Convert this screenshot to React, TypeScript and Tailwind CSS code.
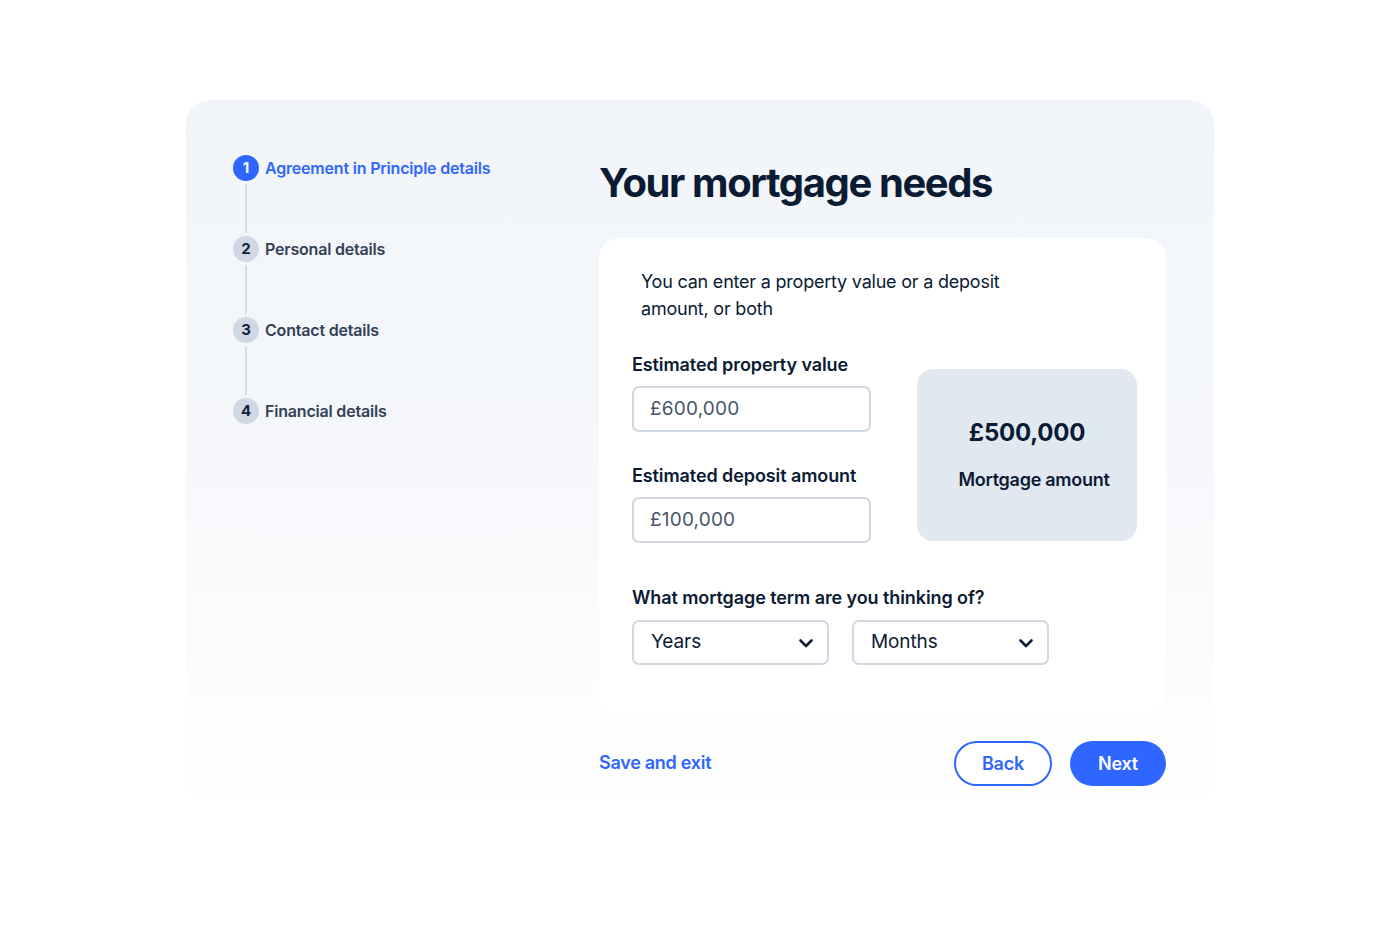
import React from "react";

const Chevron = () => (
  <svg width="18" height="18" viewBox="0 0 18 18" fill="none">
    <path d="M3.5 6.5l5.5 5.5 5.5-5.5" stroke="#0b1b33" strokeWidth="2.6" strokeLinecap="round" strokeLinejoin="round" />
  </svg>
);

const steps = [
  { n: 1, label: "Agreement in Principle details", active: true },
  { n: 2, label: "Personal details", active: false },
  { n: 3, label: "Contact details", active: false },
  { n: 4, label: "Financial details", active: false },
];

export default function App() {
  return (
    <div className="min-h-[950px] bg-white pt-[100px]" style={{ fontFamily: "Inter, 'Noto Sans', sans-serif" }}>
      <div className="mx-auto flex h-[710px] w-[1028px] rounded-[24px] bg-gradient-to-b from-[#f1f5f9] via-[#f5f7fa] to-white pl-[47px] pr-[48px] pt-[55px]">
        {/* Steps */}
        <div className="w-[366px] shrink-0">
          {steps.map((s, i) => (
            <div key={s.n} className="flex flex-col">
              <div className="flex h-[26px] items-center gap-[6px]">
                <div
                  className={
                    s.active
                      ? "flex h-[26px] w-[26px] items-center justify-center rounded-full bg-[#2f66ff] text-[15px] font-bold text-white"
                      : "flex h-[26px] w-[26px] items-center justify-center rounded-full bg-[#cfd8e3] text-[15px] font-bold text-[#0f1f3d]"
                  }
                >
                  {s.n}
                </div>
                <span
                  className={
                    s.active
                      ? "text-[16px] font-semibold tracking-[-0.012em] text-[#2f66ff]"
                      : "text-[16px] font-semibold tracking-[-0.012em] text-[#334155]"
                  }
                >
                  {s.label}
                </span>
              </div>
              {i < steps.length - 1 && (
                <div className="my-[3px] ml-[12px] h-[49px] w-[2px] bg-[#d5dce6]" />
              )}
            </div>
          ))}
        </div>

        {/* Main */}
        <div className="flex-1">
          <h1 className="mt-[4px] text-[40px] font-bold leading-[48px] tracking-[-0.035em] text-[#0b1b33]">
            Your mortgage needs
          </h1>
          <div className="mt-[31px] rounded-[20px] bg-white pb-[49px] pl-[33px] pr-[29px] pt-[30px]">
            <p className="max-w-[400px] pl-[9px] text-[18px] leading-[27px] tracking-[-0.012em] text-[#0b1b33]">
              You can enter a property value or a deposit amount, or both
            </p>
            <div className="mt-[31px] flex items-start gap-[46px]">
              <div className="w-[239px]">
                <label className="block text-[18px] font-semibold leading-[24px] tracking-[-0.005em] text-[#0b1b33]">
                  Estimated property value
                </label>
                <div className="mt-[9px] flex h-[46px] items-center rounded-[7px] border-2 border-[#cfd8e3] bg-white px-[16px] text-[19px] tracking-[0.01em] text-[#475569]">
                  £600,000
                </div>
                <label className="mt-[32px] block text-[18px] font-semibold leading-[24px] tracking-[-0.005em] text-[#0b1b33]">
                  Estimated deposit amount
                </label>
                <div className="mt-[9px] flex h-[46px] items-center rounded-[7px] border-2 border-[#cfd8e3] bg-white px-[16px] text-[19px] tracking-[0.01em] text-[#475569]">
                  £100,000
                </div>
              </div>
              <div className="mt-[16px] flex h-[172px] w-[220px] flex-col items-center justify-center rounded-[16px] bg-[#e2e8f0]">
                <div className="text-[24px] font-bold leading-[30px] tracking-[-0.01em] text-[#0b1b33]">£500,000</div>
                <div className="mt-[20px] pl-[14px] text-[18px] font-semibold leading-[24px] tracking-[-0.015em] text-[#0b1b33]">
                  Mortgage amount
                </div>
              </div>
            </div>
            <label className="mt-[43px] block text-[18px] font-semibold leading-[24px] tracking-[-0.005em] text-[#0b1b33]">
              What mortgage term are you thinking of?
            </label>
            <div className="mt-[10px] flex gap-[23px]">
              <div className="flex h-[45px] w-[197px] items-center justify-between rounded-[7px] border-2 border-[#cfd8e3] bg-white pl-[17px] pr-[12px] text-[19px] tracking-[-0.005em] text-[#0b1b33]">
                <span>Years</span>
                <Chevron />
              </div>
              <div className="flex h-[45px] w-[197px] items-center justify-between rounded-[7px] border-2 border-[#cfd8e3] bg-white pl-[17px] pr-[12px] text-[19px] tracking-[-0.005em] text-[#0b1b33]">
                <span>Months</span>
                <Chevron />
              </div>
            </div>
          </div>
          <div className="mt-[27px] flex items-center justify-between">
            <a className="mt-[-2px] text-[18px] font-semibold tracking-[-0.015em] text-[#2f66ff]">Save and exit</a>
            <div className="flex gap-[18px]">
              <button className="h-[45px] w-[98px] rounded-full border-2 border-[#2f66ff] bg-white text-[18px] font-semibold tracking-[-0.01em] text-[#2f66ff]">
                Back
              </button>
              <button className="h-[45px] w-[96px] rounded-full bg-[#2f66ff] text-[18px] font-semibold tracking-[-0.01em] text-white">
                Next
              </button>
            </div>
          </div>
        </div>
      </div>
    </div>
  );
}
